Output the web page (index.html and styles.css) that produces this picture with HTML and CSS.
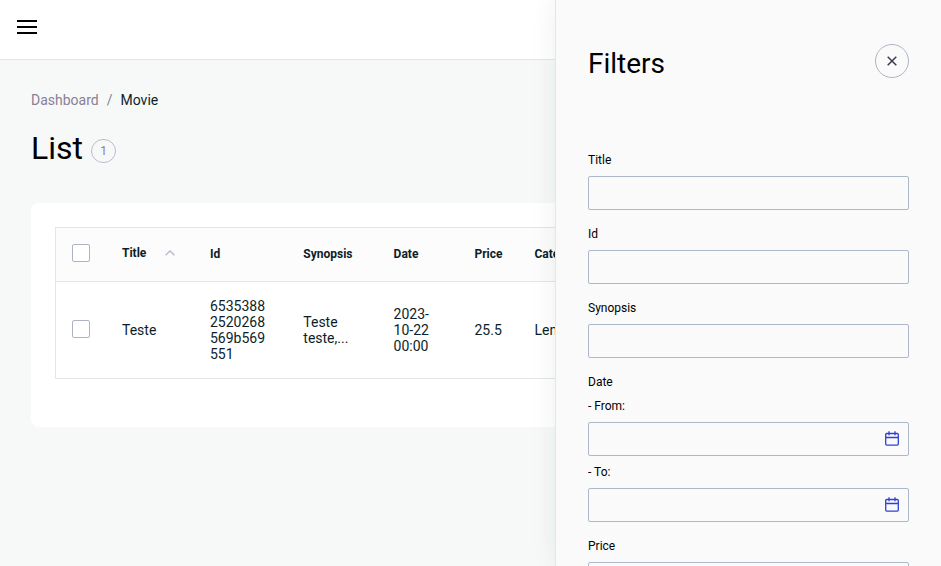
FILE: index.html
```html
<!DOCTYPE html>
<html lang="en">
<head>
<meta charset="utf-8">
<title>List</title>
<link rel="stylesheet" href="styles.css">
</head>
<body>
<div class="page">
  <header class="topbar">
    <svg class="menu" width="20" height="14" viewBox="0 0 20 14"><path d="M0 1h20M0 7h20M0 13h20" stroke="#000" stroke-width="2"/></svg>
  </header>
  <main class="content">
    <nav class="crumbs"><span class="muted">Dashboard</span><span class="muted slash">/</span><span>Movie</span></nav>
    <div class="heading"><h1>List</h1><span class="count">1</span></div>
    <section class="card">
      <div class="table">
        <div class="row head">
          <div><span class="check"></span></div>
          <div class="sorted">Title<svg class="caret" width="10" height="6" viewBox="0 0 10 6"><path d="M.6 5.3 5 .9l4.400 4.400" fill="none" stroke="#babdc9" stroke-width="1.400"/></svg></div>
          <div>Id</div><div>Synopsis</div><div>Date</div><div>Price</div><div>Category</div>
        </div>
        <div class="row body">
          <div><span class="check"></span></div>
          <div>Teste</div>
          <div>6535388<br>2520268<br>569b569<br>551</div>
          <div>Teste<br>teste,...</div>
          <div>2023-<br>10-22<br>00:00</div>
          <div>25.5</div>
          <div>Length</div>
        </div>
      </div>
    </section>
  </main>
</div>
<aside class="filters">
  <div class="filters-head">
    <h2>Filters</h2>
    <button class="close" aria-label="Close"><svg width="10" height="10" viewBox="0 0 10 10"><path d="M.7.7l8.600 8.600M9.300.7.7 9.300" stroke="#3b3b4d" stroke-width="1.500"/></svg></button>
  </div>
  <div class="field"><label>Title</label><div class="input"></div></div>
  <div class="field"><label>Id</label><div class="input"></div></div>
  <div class="field"><label>Synopsis</label><div class="input"></div></div>
  <div class="field dates">
    <label>Date</label>
    <label>- From:</label>
    <div class="input"><svg class="cal" width="14" height="15" viewBox="0 0 14 15"><path d="M1.800 2.500h10.400q1.100 0 1.100 1.100v9.500q0 1.100-1.100 1.100H1.800q-1.100 0-1.100-1.100V3.600q0-1.100 1.100-1.100zM.7 6.500h12.600M4 .3v4M10 .3v4" fill="none" stroke="#3040d6" stroke-width="1.300"/></svg></div>
    <label>- To:</label>
    <div class="input"><svg class="cal" width="14" height="15" viewBox="0 0 14 15"><path d="M1.800 2.500h10.400q1.100 0 1.100 1.100v9.500q0 1.100-1.100 1.100H1.800q-1.100 0-1.100-1.100V3.600q0-1.100 1.100-1.100zM.7 6.500h12.600M4 .3v4M10 .3v4" fill="none" stroke="#3040d6" stroke-width="1.300"/></svg></div>
  </div>
  <div class="field"><label>Price</label><div class="input"></div></div>
</aside>
</body>
</html>
```
FILE: styles.css
```css
* { box-sizing: border-box; }
body {
  margin: 0;
  height: 566px;
  display: flex;
  overflow: hidden;
  background: #f7f9f9;
  color: #0c1e29;
  font-family: Roboto, sans-serif;
  font-size: 14px;
  line-height: 16px;
}
svg { display: block; }
.page { width: 555px; flex: none; overflow: hidden; }
.topbar {
  height: 60px;
  padding: 20px 17px;
  background: #fff;
  border-bottom: 1px solid #e3e6e6;
}
.content { padding: 32px 0 0 31px; }
.crumbs { display: flex; }
.muted { color: #898095; }
.slash { margin: 0 8px; }
.heading { display: flex; height: 95px; padding-top: 20px; }
h1, h2 { margin: 0; color: #000; font-weight: 400; }
h1 { font-size: 32px; line-height: 40px; }
.count {
  width: 25px;
  height: 24px;
  margin: 11px 0 0 8px;
  border: 1px solid #babdc9;
  border-radius: 13px;
  color: #898095;
  font-size: 12px;
  line-height: 22px;
  text-align: center;
}
.card {
  width: 700px;
  height: 224px;
  padding: 24px;
  background: #fff;
  border-radius: 8px;
}
.table { border: 1px solid #e4e6e6; }
.row {
  display: grid;
  grid-template-columns: 50px 88px 93.300px 90.300px 80.900px 60px 1fr;
  align-items: center;
}
.row > div { padding-left: 16px; }
.head {
  height: 54px;
  padding-bottom: 2px;
  background: #fcfcfc;
  border-bottom: 1px solid #e4e6e6;
  font-size: 12px;
  font-weight: 700;
}
.body { height: 96px; }
.check {
  display: block;
  width: 18px;
  height: 18px;
  margin-bottom: 2px;
  background: #fff;
  border: 1px solid #adb5c5;
  border-radius: 2px;
}
.sorted { display: flex; align-items: center; margin-bottom: 2px; }
.caret { margin-left: 19px; }
.filters {
  position: relative;
  width: 386px;
  flex: none;
  padding: 44px 32px 0;
  background: #fafafa;
  border-left: 1px solid #e4e6e6;
  box-shadow: 0 0 24px rgba(12, 40, 35, .08);
  color: #000;
  font-size: 12px;
  overflow: hidden;
}
.filters-head { display: flex; justify-content: space-between; height: 108px; }
h2 { font-size: 28px; line-height: 40px; }
.close {
  display: flex;
  align-items: center;
  justify-content: center;
  width: 34px;
  height: 34px;
  padding: 0;
  background: none;
  border: 1px solid #adb5c5;
  border-radius: 50%;
}
.field { margin-bottom: 16px; }
label { display: block; height: 24px; }
.input {
  display: flex;
  align-items: center;
  justify-content: flex-end;
  height: 34px;
  padding-right: 9px;
  border: 1px solid #adb9c8;
  border-radius: 2px;
}
.cal { margin-bottom: 1px; }
.input + label { margin-top: 8px; }
```
